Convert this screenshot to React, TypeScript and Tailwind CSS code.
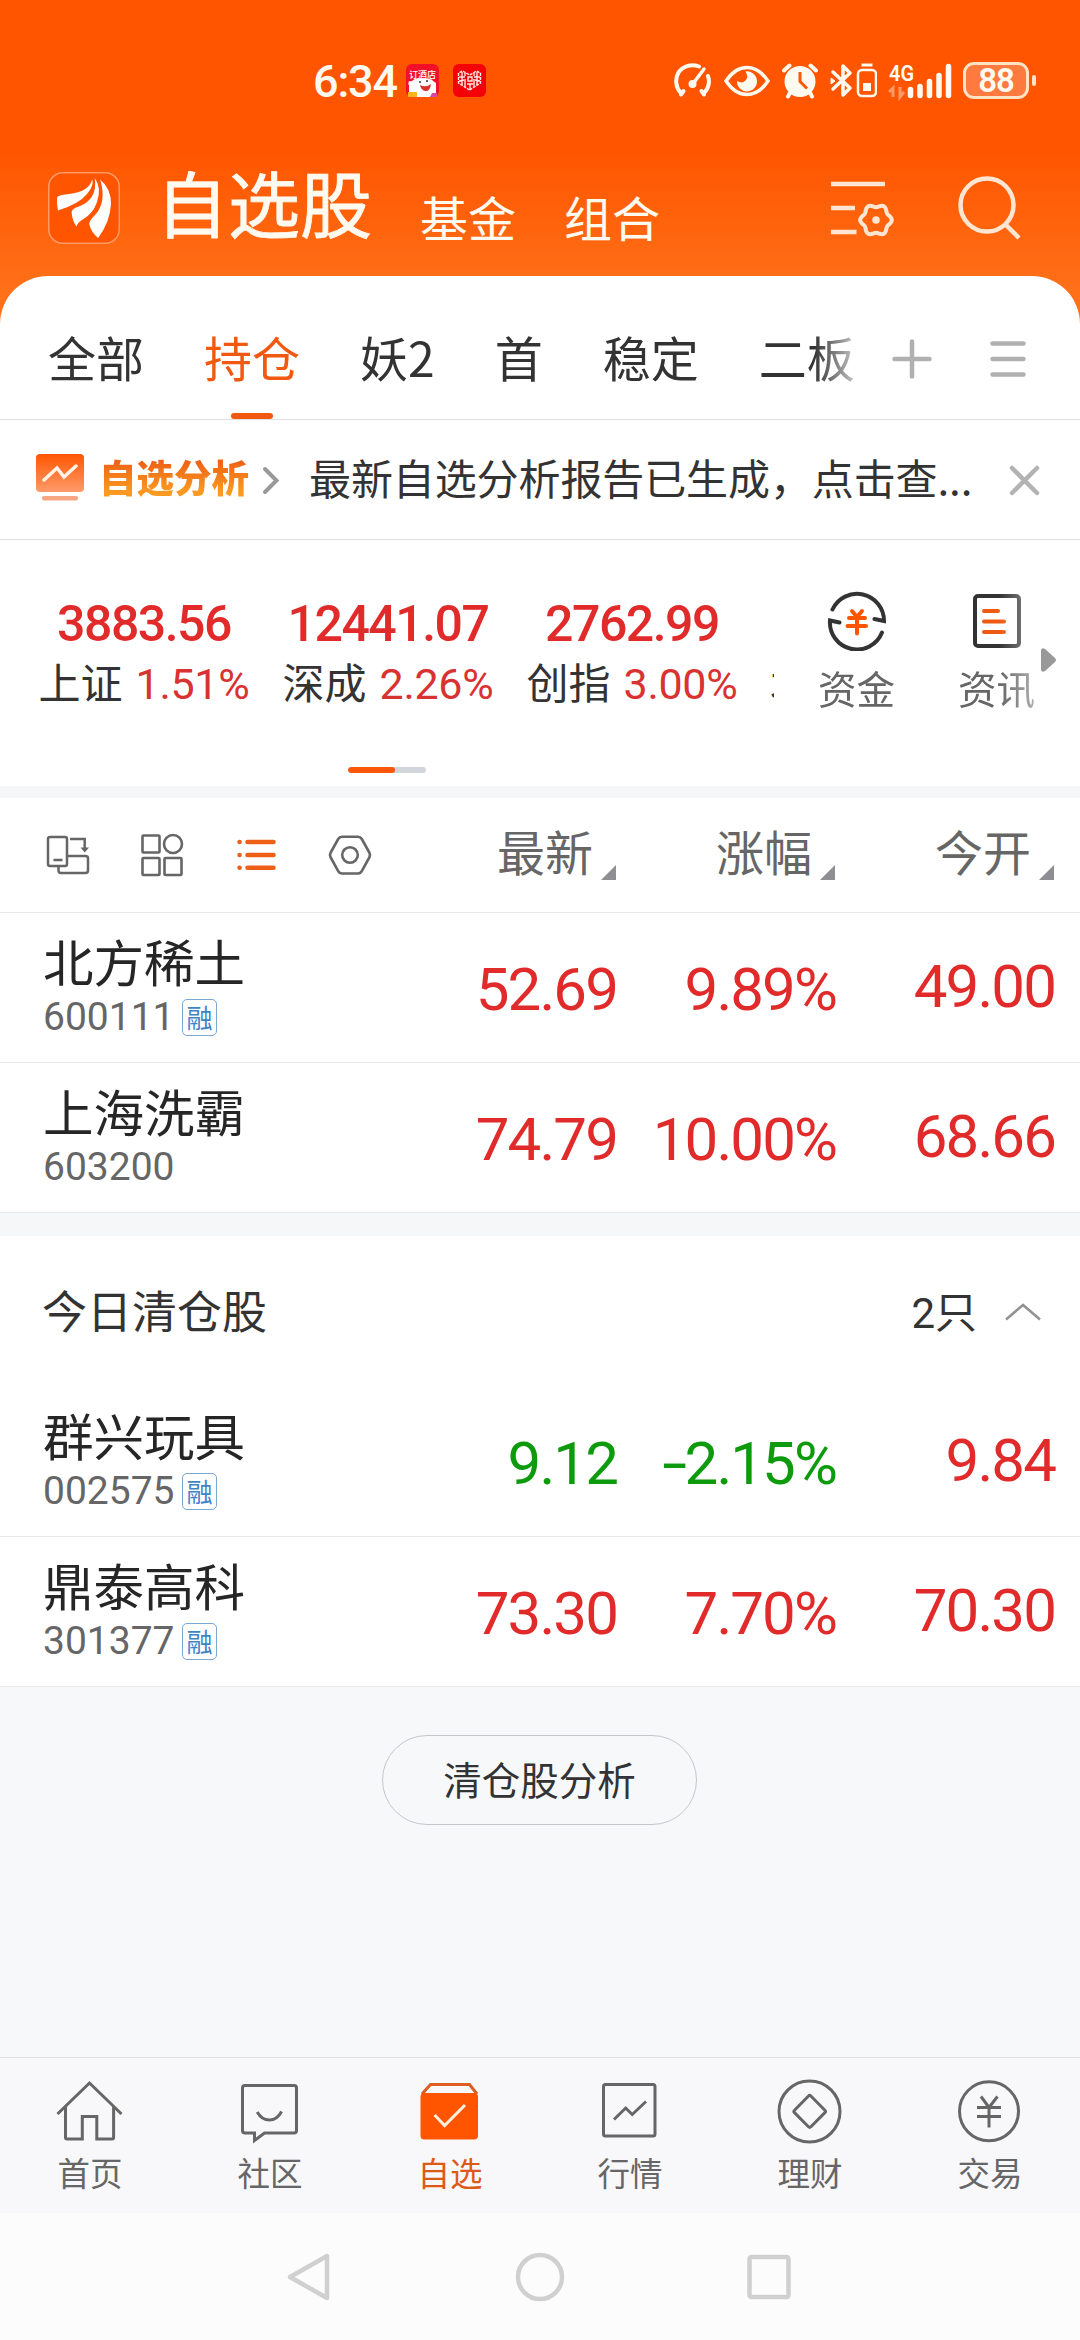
import React from "react";

type Stock = {
  name: string;
  code: string;
  margin?: boolean;
  price: string;
  change: string;
  open: string;
  down?: boolean;
};

const holdings: Stock[] = [
  { name: "北方稀土", code: "600111", margin: true, price: "52.69", change: "9.89%", open: "49.00" },
  { name: "上海洗霸", code: "603200", price: "74.79", change: "10.00%", open: "68.66" },
];

const cleared: Stock[] = [
  { name: "群兴玩具", code: "002575", margin: true, price: "9.12", change: "-2.15%", open: "9.84", down: true },
  { name: "鼎泰高科", code: "301377", margin: true, price: "73.30", change: "7.70%", open: "70.30" },
];

const indices = [
  { name: "上证", value: "3883.56", change: "1.51%" },
  { name: "深成", value: "12441.07", change: "2.26%" },
  { name: "创指", value: "2762.99", change: "3.00%" },
];

const groups = ["全部", "持仓", "妖2", "首", "稳定", "二板"];

// six-lobed gear outline around (45, 48)
const gearPoints = Array.from({ length: 72 }, (_, i) => {
  const a = (i * Math.PI) / 36;
  const r = 14.3 + 1.5 * Math.cos(6 * a);
  return `${(45 + r * Math.cos(a)).toFixed(2)},${(48 + r * Math.sin(a)).toFixed(2)}`;
}).join(" ");

function StatusBar() {
  return (
    <div className="flex h-[162px] shrink-0 items-start pt-[62px] pl-[313px] text-[#fffaf0]">
      <span className="w-[93px] font-['Roboto',sans-serif] text-[45px] leading-[39px] font-medium tracking-[-1.2px] whitespace-nowrap">
        6:34
      </span>
      <svg className="mt-[2px] size-[33px]" viewBox="0 0 33 33">
        <rect width="33" height="33" rx="6" fill="#f5102a" />
        <path d="M3 33V20q4-5 9-6l12 1 6 4v14Z" fill="#fff" />
        <path d="M3 17q-2 4 2 6l5-5ZM25 15q4 3 2 8l-4-3Z" fill="#fff" />
        <path d="M14 21q6 3 11-1-1 8-6 7-4-1-5-6Z" fill="#d8322c" />
        <circle cx="14" cy="18" r="1" fill="#333" />
        <circle cx="21" cy="17" r="1" fill="#333" />
        <path d="M2 33v-5h9v5Z" fill="#ffb21a" />
        <path d="M24 33l2-4h5v4Z" fill="#d648a0" />
        <text x="16.5" y="13.5" textAnchor="middle" fontSize="9" fontWeight="500" fill="#fff">
          订酒店
        </text>
      </svg>
      <svg className="mt-[2px] ml-[14px] size-[33px]" viewBox="0 0 33 33">
        <rect width="33" height="33" rx="6" fill="#f40009" />
        <g fill="none" stroke="#ffe9e6" strokeWidth="1.4">
          <path d="M16.500 26 5.500 19V9l4-2 7 4 7-4 4 2v10Z" strokeDasharray="3 1" />
          <path d="M9 8v13M12 9v3M12 15v8M21 9v3M21 15v8M24 8v13M6 13h6M21 13h6M6 17l5-1M22 16l5 1M15 13h4v4h-4zM17 20v5M14 20h6" />
        </g>
      </svg>

      <svg className="mt-[1px] ml-[187px] h-[35px] w-[39px]" viewBox="0 0 39 35" fill="none" stroke="currentColor">
        <path d="M8 30A17 17 0 0 1 5.500 9.500 17 17 0 0 1 26 3.500" strokeWidth="4" strokeLinecap="round" />
        <path d="M35 13a17 17 0 0 1-4 17" strokeWidth="4" strokeLinecap="round" />
        <path d="M8 31.500 10.500 28M31 31.500 28.500 28" strokeWidth="4" strokeLinecap="round" />
        <path d="m31 6-12 16" strokeWidth="3.500" strokeLinecap="round" />
        <circle cx="19.500" cy="21" r="4" fill="currentColor" stroke="none" />
      </svg>
      <svg className="mt-[2px] ml-[12px] h-[34px] w-[46px]" viewBox="0 0 46 34">
        <path d="M2 17Q11 3.500 23 3.500T44 17Q35 30.500 23 30.500T2 17Z" fill="none" stroke="currentColor" strokeWidth="3.500" />
        <path d="M21.500 7.500A10 10 0 1 1 13 17q5 3 8.500-.5T21.500 7.500Z" fill="currentColor" />
      </svg>
      <svg className="mt-[1px] ml-[12px] h-[36px] w-[36px]" viewBox="0 0 36 36">
        <circle cx="18" cy="18.500" r="15.500" fill="currentColor" />
        <path d="M2 7.500 7.500 2.500M34 7.500 28.500 2.500M8.500 29 6 33.500M27.500 29l2.500 4.500" stroke="currentColor" strokeWidth="4" strokeLinecap="round" />
        <path d="M18 9v9.500l7 7" fill="none" stroke="#ff5500" strokeWidth="3" />
      </svg>
      <svg className="mt-[1px] ml-[12px] h-[36px] w-[47px]" viewBox="0 0 47 36" fill="none" stroke="currentColor">
        <path d="m3 9 17 16-7 7V3l7 7L3 26" strokeWidth="3.500" strokeLinejoin="round" strokeLinecap="round" />
        <path d="M1 15l4 3-4 3z" fill="currentColor" strokeWidth="1" />
        <rect x="28" y="7" width="18" height="26" rx="4" strokeWidth="2.500" />
        <path d="M31.500 2h11" strokeWidth="3" />
        <rect x="33" y="20" width="8" height="8" fill="currentColor" stroke="none" />
      </svg>
      <svg className="mt-[1px] ml-[12px] h-[36px] w-[64px] overflow-visible" viewBox="0 0 64 36">
        <text x="0" y="17.500" fontFamily="Roboto, sans-serif" fontSize="22" fontWeight="600" textLength="25" lengthAdjust="spacingAndGlyphs" fill="currentColor">
          4G
        </text>
        <path d="M4 34V25l-4 4M11 24v10l4-5" fill="none" stroke="#ff9a66" strokeWidth="3" />
        <path d="M21.500 26.500v6M31 23.500v9M40.500 18.500v14M50 12.500v20M59.500 3.500v29" stroke="currentColor" strokeWidth="5.500" strokeLinecap="round" />
      </svg>
      <div className="ml-[10px] flex h-[37px] w-[66px] items-center justify-center rounded-[11px] border-[3px] border-[#ffe3c4] bg-[#ff7a3e] font-['Roboto',sans-serif] text-[33px] leading-none font-semibold tracking-[-1px]">
        88
      </div>
      <div className="mt-[13px] ml-[3px] h-[11px] w-[4px] rounded-sm bg-[#ffe3c4]" />
    </div>
  );
}

function Header() {
  return (
    <header className="flex h-[114px] shrink-0 items-start pt-[10px] pl-[48px] text-[#fffaf0]">
      <svg className="size-[72px]" viewBox="0 0 72 72">
        <rect x=".75" y=".75" width="70.500" height="70.500" rx="14" fill="#ff5500" stroke="#ff9a66" strokeWidth="1.500" />
        <g fill="#fff">
          <path d="M9.200 25Q12 22.500 21 22 41 20 44.300 7.300 46 14 39 22 31 32 9.900 38.500 8.500 31 9.200 25Z" />
          <path d="M46.700 6Q54 16 49 30 45 42 34.600 47.500 30 50 28.400 54.500 24 48 23.600 40 24 36.500 31 34.500 50 27 46.700 6Z" />
          <path d="M52.200 7.700Q63 16 63 32 62 50 50.100 66 43 60 41.200 52 41.500 48 47 43 59 30 52.200 7.700Z" />
        </g>
      </svg>
      <h1 className="-mt-[4px] ml-[36px] w-[261px] text-[72px] leading-[66px] whitespace-nowrap [-webkit-text-stroke:0.8px_#fffaf0]">自选股</h1>
      <span className="mt-[11px] ml-[3px] w-[144px] text-[48px] leading-[66px]">基金</span>
      <span className="mt-[11px] text-[48px] leading-[66px]">组合</span>
      <svg className="ml-[171px] h-[72px] w-[66px]" viewBox="0 0 66 72" fill="none" stroke="#ffe6d2" strokeWidth="4.500">
        <path d="M0 12h54M0 36h24M0 60h25.500" />
        <polygon points={gearPoints} strokeWidth="4" strokeLinejoin="round" />
        <circle cx="45" cy="48" r="3.800" fill="#ffe6d2" stroke="none" />
      </svg>
      <svg className="ml-[60px] size-[68px]" viewBox="0 0 68 68" fill="none" stroke="#ffe6d2" strokeWidth="4.500">
        <circle cx="30" cy="33" r="26.500" />
        <path d="m48 52 14 14" />
      </svg>
    </header>
  );
}

function GroupTabs() {
  return (
    <div className="flex h-[144px] shrink-0 border-b border-[#e2e2e2] pl-[48px]">
      <div className="flex w-[806px] gap-[60px] overflow-hidden [mask-image:linear-gradient(to_right,black_95%,rgba(0,0,0,0.3)_100%)]">
        {groups.map((g, i) => (
          <div
            key={g}
            className={`flex shrink-0 flex-col items-center text-[48px] whitespace-nowrap ${i === 1 ? "text-[#f0590f]" : "text-[#333]"}`}
          >
            <span className="mt-[44px] h-[93px] leading-[72px]">{g}</span>
            {i === 1 && <i className="h-[6px] w-[42px] rounded-full bg-[#f0590f]" />}
          </div>
        ))}
      </div>
      <svg className="mt-[62px] ml-[37px] size-[42px]" viewBox="0 0 42 42" stroke="#b0b0b0" strokeWidth="4.500" strokeLinecap="round">
        <path d="M21 3.500v35M3.500 21h35" />
      </svg>
      <svg className="mt-[62px] ml-[54px] size-[42px]" viewBox="0 0 42 42" stroke="#b0b0b0" strokeWidth="4.500" strokeLinecap="round">
        <path d="M5.500 5.500h31M5.500 21h31M5.500 36.500h31" />
      </svg>
    </div>
  );
}

function AnalysisBar() {
  return (
    <div className="flex h-[120px] shrink-0 items-center border-b border-[#e2e2e2] pl-[36px]">
      <svg className="-mt-[4px] h-[47px] w-[48px]" viewBox="0 0 48 47" fill="none">
        <defs>
          <linearGradient id="chart" x2="0" y2="1">
            <stop stopColor="#ff5500" />
            <stop offset="1" stopColor="#ff9b6b" />
          </linearGradient>
        </defs>
        <rect width="48" height="38" rx="4" fill="url(#chart)" />
        <path d="m8 26 13-12 7 9 12-11" stroke="#fff3e8" strokeWidth="3.500" strokeLinecap="round" />
        <rect x="6" y="42" width="36" height="4.500" rx="2" fill="#f7a684" />
      </svg>
      <b className="-mt-[7px] ml-[15px] w-[152px] bg-linear-to-b from-[#ee6318] from-25% to-[#fb9a20] to-80% bg-clip-text text-[37.5px] leading-[54px] font-black whitespace-nowrap text-transparent">
        自选分析
      </b>
      <svg className="ml-[10px] h-[30px] w-[20px]" viewBox="0 0 20 30" fill="none" stroke="#999" strokeWidth="4" strokeLinecap="round">
        <path d="m4 4 11.500 11.500L4 27" />
      </svg>
      <p className="-mt-[6px] ml-[28px] w-[662px] text-[42px] leading-[60px] tracking-[-0.1px] whitespace-nowrap text-[#333]">
        最新自选分析报告已生成，点击查...
      </p>
      <svg className="ml-[36px] size-[34px]" viewBox="0 0 34 34" stroke="#b3b3b3" strokeWidth="4.500" strokeLinecap="round">
        <path d="M5 5l25 25M30 5 5 30" />
      </svg>
    </div>
  );
}

function MarketPanel() {
  return (
    <section className="flex h-[246px] shrink-0">
      <div className="w-[774px] pl-[22px]">
        <div className="mt-[55px] flex h-[120px] overflow-hidden">
          {indices.map((it) => (
            <div key={it.name} className="w-[244px] shrink-0 text-center whitespace-nowrap">
              <div className="font-['Roboto',sans-serif] text-[50px] leading-[58px] font-medium tracking-[-1.5px] text-[#e12a2a]">
                {it.value}
              </div>
              <div className="-mt-[3px] flex items-baseline justify-center gap-[13px] leading-[62px]">
                <span className="text-[42px] text-[#333]">{it.name}</span>
                <span className="font-['Roboto',sans-serif] text-[43px] tracking-[-0.3px] text-[#d93232]">{it.change}</span>
              </div>
            </div>
          ))}
          <div className="w-[244px] shrink-0 pt-[55px] pl-[16px] text-[42px] leading-[62px] text-[#333]">北证</div>
        </div>
        <div className="mt-[52px] ml-[326px] h-[6px] w-[78px] overflow-hidden rounded-full bg-[#d2d6da]">
          <div className="h-full w-[47px] rounded-full bg-[#fb560a]" />
        </div>
      </div>

      <div className="flex w-[262px] pl-[43px] text-[38.5px] leading-[48px] text-[#666] [mask-image:linear-gradient(to_right,black_86%,rgba(0,0,0,0.5)_100%)]">
        <div className="flex w-[80px] flex-col items-center pt-[51px]">
          <svg className="size-[60px]" viewBox="0 0 60 60" fill="none" strokeLinecap="round">
            <g stroke="#333" strokeWidth="4">
              <path d="M5.500 18.500A27 27 0 0 1 57 30L47.500 28" />
              <path d="M55 41.500A27 27 0 0 1 3 29.500L12.500 31.500" />
            </g>
            <g stroke="#ff5500" strokeWidth="4">
              <path d="m25 20 5 6 5-6M22 27h16M20.500 35h18.500M30 27v15.500" />
            </g>
          </svg>
          <span className="mt-[12px] whitespace-nowrap">资金</span>
        </div>
        <div className="ml-[61px] flex w-[80px] flex-col items-center pt-[51px]">
          <svg className="size-[60px]" viewBox="0 0 60 60" fill="none" strokeLinecap="round">
            <rect x="8" y="5" width="44" height="50" rx="3" stroke="#333" strokeWidth="4" />
            <path d="M17 20h14M17 30.500h20M17 41h20" stroke="#ee5a12" strokeWidth="4" />
          </svg>
          <span className="mt-[12px] whitespace-nowrap">资讯</span>
        </div>
      </div>
      <svg className="mt-[108px] ml-[5px] h-[24px] w-[15px]" viewBox="0 0 15 24" fill="#999">
        <path d="M0 2q1-3 4-1l10 9q2 2 0 4L4 23q-3 2-4-1Z" />
      </svg>
    </section>
  );
}

function TableHead() {
  return (
    <div className="flex h-[115px] shrink-0 items-center border-b border-[#e9e9e9] pr-[26px] pl-[44px]">
      <div className="flex gap-[46px] text-[#666]">
        <svg className="size-[48px]" viewBox="0 0 48 48" fill="none" stroke="currentColor" strokeWidth="2.500">
          <rect x="4" y="6" width="19" height="29" rx="2" />
          <path d="M9.500 29h9M26 8h14.700v9M23 25h18.500q2.500 0 2.500 2.500v12q0 2.500-2.500 2.500H17q-2.500 0-2.500-2.500V35" />
          <path d="M36.500 16.500h8.500l-4.300 5Z" fill="currentColor" stroke="none" />
        </svg>
        <svg className="size-[48px]" viewBox="0 0 48 48" fill="none" stroke="currentColor" strokeWidth="2.600">
          <rect x="4.500" y="4.500" width="17" height="17" rx="1" />
          <circle cx="35" cy="13" r="9" />
          <rect x="4.500" y="27" width="17" height="17" rx="1" />
          <rect x="26.500" y="27" width="17" height="17" rx="1" />
        </svg>
        <svg className="size-[48px]" viewBox="0 0 48 48" fill="none" stroke="#ee5f18" strokeWidth="4.500" strokeLinecap="round">
          <path d="M7.500 11h.1M7.500 24h.1M7.500 36.700h.1M15.500 11h26M15.500 24h26M15.500 36.700h26" />
        </svg>
        <svg className="size-[48px]" viewBox="0 0 48 48" fill="none" stroke="currentColor" strokeWidth="2.600">
          <path d="M16 5.800h16q2.500 0 3.800 2.200l7.500 13.500q1.400 2.500 0 5l-7.500 13.500q-1.300 2.500-3.800 2.500H16q-2.500 0-3.800-2.500L4.700 26.500q-1.400-2.500 0-5L12.200 8q1.300-2.200 3.800-2.200Z" />
          <circle cx="24" cy="24" r="7.800" />
        </svg>
      </div>
      <div className="ml-auto flex text-[48px] leading-[70px] text-[#666]">
        {["最新", "涨幅", "今开"].map((t) => (
          <div key={t} className="flex w-[219px] items-end justify-end gap-[8px]">
            <span className="-mt-[5px] mb-[5px]">{t}</span>
            <i className="mb-[10px] size-[15px] bg-[#8e8e93] [clip-path:polygon(100%_0,100%_100%,0_100%)]" />
          </div>
        ))}
      </div>
    </div>
  );
}

function StockRow({ stock }: { stock: Stock }) {
  const color = stock.down ? "text-[#0d9a0d]" : "text-[#e12a2a]";
  return (
    <div className="flex h-[150px] shrink-0 border-b border-[#e9e9e9] pr-[25px] pl-[43px]">
      <div className="w-[355px]">
        <div className="mt-[10px] text-[50.5px] leading-[74px] text-[#262626]">{stock.name}</div>
        <div className="mt-px flex h-[38px] items-center">
          <span className="w-[139px] font-['Roboto',sans-serif] text-[39px] leading-[38px] text-[#666]">{stock.code}</span>
          {stock.margin && (
            <span className="flex h-[37px] w-[35px] items-center justify-center rounded-[5px] border-[1.5px] border-[#7aa7d4] pb-[2px] text-[26px] leading-[33px] text-[#3f84c6]">
              融
            </span>
          )}
        </div>
      </div>
      <div className={`flex font-['Roboto',sans-serif] text-[60px] leading-[70px] tracking-[-1.9px] whitespace-nowrap ${color}`}>
        <span className="mt-[42px] w-[219px] text-right">{stock.price}</span>
        <span className="mt-[42px] w-[219px] text-right">
          {stock.change.startsWith("-") && <span className="mr-[4px] inline-block scale-x-150">-</span>}
          {stock.change.replace("-", "")}
        </span>
        <span className="mt-[39px] w-[219px] text-right text-[#e12a2a]">{stock.open}</span>
      </div>
    </div>
  );
}

const tabs = [
  {
    label: "首页",
    icon: <path d="M3.500 39 35.500 8l32 31M11.500 32v30.500q0 1.500 1.500 1.500h15.300V41.500h14.500V64h15.300q1.500 0 1.500-1.500V32" />,
  },
  {
    label: "社区",
    icon: (
      <>
        <path d="M11 10.500h49q2.500 0 2.500 2.500v42.500q0 2.500-2.500 2.500H30.500l-10 7.500V58H11q-2.500 0-2.500-2.500V13q0-2.500 2.500-2.500Z" />
        <path d="M23.200 37q4.500 8 12.200 8t12.200-8.500" />
      </>
    ),
  },
  {
    label: "自选",
    icon: (
      <>
        <path d="M8 19 16.500 9.500h39L63 19" stroke="#dd5d22" />
        <rect x="6.500" y="18" width="57.500" height="46.500" rx="4" fill="#ff5500" stroke="none" />
        <path d="m20.600 40 10 10.500 20.400-20.500" stroke="#ffeedd" />
      </>
    ),
  },
  {
    label: "行情",
    icon: (
      <>
        <rect x="9.500" y="9.500" width="51.500" height="51.500" rx="2" />
        <path d="m20 44.500 11.700-11.500 6.500 6.500L52 26.500" />
      </>
    ),
  },
  {
    label: "理财",
    icon: (
      <>
        <circle cx="35.500" cy="36.500" r="30.500" />
        <path d="M34.500 21q1.200-1.200 2.400 0l14 14.200q1.200 1.200 0 2.400l-14 14.200q-1.200 1.200-2.400 0l-14-14.200q-1.200-1.200 0-2.400Z" />
      </>
    ),
  },
  {
    label: "交易",
    icon: (
      <>
        <circle cx="35" cy="36.300" r="29.500" />
        <path d="m27 21.500 8 11 8.500-11M23 32.500h24M23 41.500h24M35 32.500v20" />
      </>
    ),
  },
];

function BottomTabs() {
  return (
    <nav className="grid h-[156px] shrink-0 grid-cols-6 border-t border-[#e0e0e2] bg-[#f8f8fa]">
      {tabs.map((t, i) => (
        <div key={t.label} className={`flex flex-col items-center pt-[17px] ${i === 2 ? "text-[#dc5a18]" : "text-[#666]"}`}>
          <svg className="size-[72px]" viewBox="0 0 72 72" fill="none" stroke="currentColor" strokeWidth="3">
            {t.icon}
          </svg>
          <span className="mt-[2px] text-[32.5px] leading-[46px]">{t.label}</span>
        </div>
      ))}
    </nav>
  );
}

function SystemNav() {
  return (
    <div className="flex h-[127px] shrink-0 items-center justify-center gap-[176px] bg-[#fcfcfc]">
      <svg className="size-[54px]" viewBox="0 0 54 54" fill="none" stroke="#d0d0d0" strokeWidth="4.500" strokeLinejoin="round">
        <path d="M44 6v42L7 27Z" />
      </svg>
      <svg className="size-[54px]" viewBox="0 0 54 54" fill="none" stroke="#d0d0d0" strokeWidth="4.500">
        <circle cx="27" cy="27" r="22" />
      </svg>
      <svg className="size-[54px]" viewBox="0 0 54 54" fill="none" stroke="#d0d0d0" strokeWidth="4.500">
        <rect x="6.500" y="7" width="39" height="40" rx="2" />
      </svg>
    </div>
  );
}

function App() {
  return (
    <div className="flex h-[2340px] w-[1080px] flex-col overflow-hidden bg-[#f7f8fa] bg-linear-[180deg,#ff5500_0px,#ff5500_150px,#ff7018_290px,#ff7018_330px,#f7f8fa_331px] font-['Noto_Sans_CJK_SC',sans-serif]">
      <StatusBar />
      <Header />
      <main className="flex flex-1 flex-col">
        <div className="flex flex-col rounded-t-[48px] bg-white">
          <GroupTabs />
          <AnalysisBar />
          <MarketPanel />
          <div className="h-[12px] bg-[#f6f7f9]" />
          <TableHead />
          {holdings.map((s) => (
            <StockRow key={s.code} stock={s} />
          ))}
          <div className="h-[23px] bg-[#f6f7f9]" />
          <div className="flex h-[151px] items-center pr-[38px] pl-[42px] text-[#333]">
            <h2 className="-mt-[3px] text-[45px] leading-[64px]">今日清仓股</h2>
            <span className="ml-auto text-[42px] leading-[64px]">
              <span className="font-['Roboto',sans-serif]">2</span>只
            </span>
            <svg className="ml-[27px] h-[22px] w-[38px]" viewBox="0 0 38 22" fill="none" stroke="#919191" strokeWidth="2.500">
              <path d="M2 18.500 19 4l17 14.500" />
            </svg>
          </div>
          {cleared.map((s) => (
            <StockRow key={s.code} stock={s} />
          ))}
        </div>
        <button className="mx-auto mt-[48px] mr-[383px] h-[90px] w-[315px] rounded-full border-[1.5px] border-[#c4c6c9] pb-[5px] text-[38.5px] leading-[56px] text-[#333]">
          清仓股分析
        </button>
      </main>
      <BottomTabs />
      <SystemNav />
    </div>
  );
}

export default App;
